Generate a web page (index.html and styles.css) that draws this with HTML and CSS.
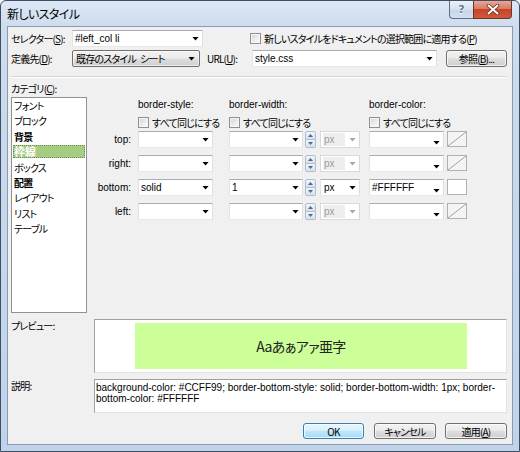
FILE: index.html
```html
<!DOCTYPE html>
<html lang="ja">
<head>
<meta charset="utf-8">
<title>新しいスタイル</title>
<link rel="stylesheet" href="styles.css">
</head>
<body>
<div class="window">
  <div class="titlebar">
    <span class="title">新しいスタイル</span>
    <div class="caps">
      <div class="cap help">?</div>
      <div class="cap close">
        <svg width="14" height="11" viewBox="0 0 14 11"><path d="M2.5 1.5 L11.5 9.5 M11.5 1.5 L2.5 9.5" stroke="#6b2a1e" stroke-width="3.6" stroke-linecap="round"/><path d="M2.5 1.5 L11.5 9.5 M11.5 1.5 L2.5 9.5" stroke="#ffffff" stroke-width="2" stroke-linecap="round"/></svg>
      </div>
    </div>
  </div>
  <div class="client">
    <div class="row r1">
      <span class="lbl">セレクター(<u>S</u>):</span>
      <div class="combo sel"><span class="txt lat">#left_col li</span><i class="arr"></i></div>
      <div class="chk apply"><span class="cb"></span><span>新しいスタイルをドキュメントの選択範囲に適用する(<u>P</u>)</span></div>
    </div>
    <div class="row r2">
      <span class="lbl">定義先(<u>D</u>):</span>
      <div class="dropbtn"><span class="txt">既存のスタイル&ensp;シート</span><i class="arr"></i></div>
      <span class="url-lbl">URL(<u>U</u>):</span>
      <div class="combo url"><span class="txt lat">style.css</span><i class="arr"></i></div>
      <div class="btn browse">参照(<u>B</u>)...</div>
    </div>
    <div class="sep"></div>
    <div class="cat-lbl">カテゴリ(<u>C</u>):</div>
    <div class="main">
      <ul class="catlist">
        <li>フォント</li>
        <li>ブロック</li>
        <li class="b">背景</li>
        <li class="b on"><span>枠線</span></li>
        <li>ボックス</li>
        <li class="b">配置</li>
        <li>レイアウト</li>
        <li>リスト</li>
        <li>テーブル</li>
      </ul>
      <div class="bgrid">
        <div class="hd lat c-style">border-style:</div>
        <div class="hd lat c-width">border-width:</div>
        <div class="hd lat c-color">border-color:</div>

        <div class="chk c-style ck"><span class="cb"></span><span>すべて同じにする</span></div>
        <div class="chk c-width ck"><span class="cb"></span><span>すべて同じにする</span></div>
        <div class="chk c-color ck"><span class="cb"></span><span>すべて同じにする</span></div>

        <div class="rl lat">top:</div>
        <div class="combo st"><span class="txt"></span><i class="arr"></i></div>
        <div class="combo wd"><span class="txt"></span><i class="arr"></i></div>
        <div class="spin"><span class="up"></span><span class="dn"></span></div>
        <div class="combo unit dis"><span class="txt lat">px</span><i class="arr"></i></div>
        <div class="combo col"><span class="txt"></span><i class="arr low"></i></div>
        <div class="sw none"></div>

        <div class="rl lat">right:</div>
        <div class="combo st"><span class="txt"></span><i class="arr"></i></div>
        <div class="combo wd"><span class="txt"></span><i class="arr"></i></div>
        <div class="spin"><span class="up"></span><span class="dn"></span></div>
        <div class="combo unit dis"><span class="txt lat">px</span><i class="arr"></i></div>
        <div class="combo col"><span class="txt"></span><i class="arr low"></i></div>
        <div class="sw none"></div>

        <div class="rl lat">bottom:</div>
        <div class="combo st"><span class="txt lat">solid</span><i class="arr"></i></div>
        <div class="combo wd"><span class="txt lat">1</span><i class="arr"></i></div>
        <div class="spin"><span class="up"></span><span class="dn"></span></div>
        <div class="combo unit"><span class="txt lat">px</span><i class="arr"></i></div>
        <div class="combo col"><span class="txt lat">#FFFFFF</span><i class="arr low"></i></div>
        <div class="sw white"></div>

        <div class="rl lat">left:</div>
        <div class="combo st"><span class="txt"></span><i class="arr"></i></div>
        <div class="combo wd"><span class="txt"></span><i class="arr"></i></div>
        <div class="spin"><span class="up"></span><span class="dn"></span></div>
        <div class="combo unit dis"><span class="txt lat">px</span><i class="arr"></i></div>
        <div class="combo col"><span class="txt"></span><i class="arr low"></i></div>
        <div class="sw none"></div>
      </div>
    </div>
    <div class="prow">
      <div class="side-lbl">プレビュー:</div>
      <div class="pbox"><div class="pinner">Aaあぁアァ亜字</div></div>
    </div>
    <div class="drow">
      <div class="side-lbl">説明:</div>
      <div class="dbox lat">background-color: #CCFF99; border-bottom-style: solid; border-bottom-width: 1px; border-<br>bottom-color: #FFFFFF</div>
    </div>
    <div class="buttons">
      <div class="btn ok">OK</div>
      <div class="btn cancel">キャンセル</div>
      <div class="btn apply-btn">適用(<u>A</u>)</div>
    </div>
  </div>
</div>
</body>
</html>
```

FILE: styles.css
```css
* { box-sizing: border-box; }
html, body { margin: 0; padding: 0; background: #ffffff; }

.window {
  width: 520px;
  height: 452px;
  border: 1px solid #3f4e63;
  border-radius: 6px 6px 0 0;
  background: linear-gradient(180deg, #dde8f5 0, #cddcee 26px, #bfd3ea 100%);
  padding: 0 6px 6px;
  display: flex;
  flex-direction: column;
  font-family: "Noto Sans CJK JP", sans-serif;
  font-size: 10px;
  letter-spacing: -0.8px;
  font-feature-settings: "palt";
  line-height: 13px;
  color: #000;
  overflow: hidden;
}

.lat {
  font-family: "Liberation Sans", "Noto Sans CJK JP", sans-serif;
  font-size: 10px;
  letter-spacing: 0;
  font-feature-settings: normal;
}

u { text-decoration: underline; text-underline-offset: 1px; }

/* title bar */
.titlebar { height: 25px; display: flex; align-items: flex-start; flex-shrink: 0; }
.title { font-size: 12px; letter-spacing: -0.6px; line-height: 25px; color: #000; }
.caps { margin-left: auto; margin-right: 1px; display: flex; }
.cap { height: 18px; display: flex; align-items: center; justify-content: center; border: 1px solid #5f6f86; border-top: none; }
.help {
  width: 24px;
  border-radius: 0 0 0 4px;
  border-right: none;
  background: linear-gradient(180deg, #eaf1f9 0%, #d5e1ef 50%, #c5d4e8 51%, #d3e0f0 100%);
  color: #6a7a90;
  font-family: "DejaVu Sans", sans-serif;
  font-size: 11px;
  letter-spacing: 0;
  font-weight: bold;
  text-shadow: 0 1px 0 #fff;
}
.close {
  width: 39px;
  border-radius: 0 0 4px 0;
  border-color: #6a3428;
  background: linear-gradient(180deg, #e9a898 0%, #d97a64 45%, #c5442a 50%, #d2583a 100%);
}

/* client */
.client {
  flex: 1;
  background: #f0f0f0;
  border: 1px solid #8a9ab0;
  padding: 0 5px 0 3px;
  display: flex;
  flex-direction: column;
}

.row { display: flex; align-items: center; height: 17px; flex-shrink: 0; }
.r1 { margin-top: 3px; }
.r2 { margin-top: 3px; }
.lbl { width: 61px; white-space: nowrap; }

.combo {
  height: 17px;
  background: #fff;
  border: 1px solid;
  border-color: #abadb3 #dbdfe6 #e3e9ef #e2e3ea;
  display: flex;
  align-items: center;
  padding: 0 3px 0 2px;
  flex-shrink: 0;
}
.combo .txt { flex: 1; white-space: nowrap; overflow: hidden; }
.arr {
  display: block;
  width: 7px;
  height: 4px;
  background: #000;
  clip-path: polygon(0 0, 100% 0, 50% 100%);
  flex-shrink: 0;
}
.arr.low { margin-top: 6px; }

.sel { width: 131px; }
.url { width: 185px; }

.chk { display: flex; align-items: center; gap: 3px; white-space: nowrap; }
.apply { margin-left: 47px; }
.cb {
  width: 11px;
  height: 11px;
  border: 1px solid #8e8f8f;
  background: linear-gradient(135deg, #cfd2d6 0%, #eeeeee 60%, #fbfbfb 100%);
  box-shadow: inset 0 0 0 1px #f6f6f6;
  flex-shrink: 0;
}

.dropbtn {
  width: 128px;
  height: 17px;
  border: 1px solid #707070;
  border-radius: 2px;
  background: linear-gradient(180deg, #f2f2f2 0%, #ebebeb 48%, #dddddd 52%, #cfcfcf 100%);
  box-shadow: inset 0 0 0 1px rgba(255,255,255,0.6);
  display: flex;
  align-items: center;
  padding: 0 4px 0 3px;
  flex-shrink: 0;
}
.dropbtn .txt { flex: 1; white-space: nowrap; }

.url-lbl { margin-left: 7px; width: 45px; white-space: nowrap; }

.btn {
  height: 17px;
  border: 1px solid #707070;
  border-radius: 3px;
  background: linear-gradient(180deg, #f2f2f2 0%, #ebebeb 45%, #dddddd 52%, #cfcfcf 100%);
  box-shadow: inset 0 0 0 1px rgba(255,255,255,0.7);
  display: flex;
  align-items: center;
  justify-content: center;
  white-space: nowrap;
  flex-shrink: 0;
}
.browse { margin-left: 9px; width: 61px; }

.sep {
  margin-top: 9px;
  height: 2px;
  border-top: 1px solid #d5d5d5;
  border-bottom: 1px solid #ffffff;
  flex-shrink: 0;
}

.cat-lbl { margin-top: 4px; height: 13px; flex-shrink: 0; }

.main { display: flex; margin-top: 2px; height: 216px; flex-shrink: 0; }

.catlist {
  width: 76px;
  height: 216px;
  margin: 0;
  padding: 0;
  list-style: none;
  background: #fff;
  border: 1px solid #8e9298;
  flex-shrink: 0;
}
.catlist li {
  height: 15.4px;
  line-height: 15.4px;
  padding-left: 2px;
  white-space: nowrap;
}
.catlist li.b { font-weight: bold; }
.catlist li.on { padding: 1px 1px 0; }
.catlist li.on span {
  display: block;
  height: 13px;
  line-height: 13px;
  padding-left: 1px;
  background: #a5cc80;
  color: #fff;
  font-size: 11px;
  letter-spacing: 0;
  outline: 1px dotted #6f8a58;
  outline-offset: -1px;
}

.bgrid {
  display: grid;
  grid-template-columns: 51px 91px 76px 15px 49px 78px 20px;
  grid-template-rows: 15px 19px 24px 24px 24px 24px;
  align-items: start;
}
.hd { line-height: 15px; white-space: nowrap; }
.c-style { grid-column: 2; }
.c-width { grid-column: 3 / span 3; }
.c-color { grid-column: 6 / span 2; }
.ck { margin-top: 4px; }

.rl { grid-column: 1; text-align: right; padding-right: 7px; line-height: 17px; }
.st { width: 75px; }
.wd { width: 74px; }
.col { width: 75px; }
.unit { width: 40px; }
.unit .txt { padding-left: 1px; }
.unit.dis { border-color: #d9d9d9; color: #9a9a9a; }
.unit.dis .txt { background: #eeeeee; margin-right: 4px; }
.unit.dis .arr { background: #a8a8a8; }

.spin {
  width: 11px;
  height: 17px;
  display: flex;
  flex-direction: column;
}
.spin span {
  flex: 1;
  border: 1px solid #b1bdcd;
  background: linear-gradient(180deg, #f2f6fb 0%, #d6e0ec 100%);
  position: relative;
}
.spin .up { border-radius: 2px 2px 0 0; }
.spin .dn { border-radius: 0 0 2px 2px; border-top: none; }
.spin span::after {
  content: "";
  position: absolute;
  left: 2px;
  top: 2px;
  width: 5px;
  height: 3px;
  background: #4a6a98;
}
.spin .up::after { clip-path: polygon(50% 0, 100% 100%, 0 100%); }
.spin .dn::after { clip-path: polygon(0 0, 100% 0, 50% 100%); top: 2px; }

.sw {
  width: 20px;
  height: 16px;
  border: 1px solid #b0b0b0;
}
.sw.none {
  background: linear-gradient(to bottom right, transparent calc(50% - 0.7px), #9a9a9a 50%, transparent calc(50% + 0.7px)), #f4f4f4;
}
.sw.white { background: #ffffff; }

.prow, .drow { display: flex; flex-shrink: 0; }
.prow { margin-top: 6px; }
.drow { margin-top: 6px; }
.side-lbl { width: 83px; flex-shrink: 0; }

.pbox {
  width: 413px;
  height: 54px;
  border: 1px solid;
  border-color: #a0a0a0 #e3e3e3 #e3e3e3 #a0a0a0;
  background: #fff;
  padding: 3px 39px 3px 40px;
}
.pinner {
  height: 100%;
  background: #ccff99;
  display: flex;
  align-items: center;
  justify-content: center;
  font-size: 14px;
  letter-spacing: -0.6px;
  color: #222;
}

.dbox {
  width: 413px;
  height: 34px;
  border: 1px solid;
  border-color: #a0a0a0 #e3e3e3 #e3e3e3 #a0a0a0;
  background: #fff;
  padding: 2px 1px 0 1px;
  line-height: 11px;
  white-space: nowrap;
  overflow: hidden;
}

.buttons {
  display: flex;
  justify-content: flex-end;
  margin-top: 10px;
  flex-shrink: 0;
}
.buttons .btn { height: 16px; }
.ok {
  width: 61px;
  border-color: #3c7fb1;
  background: linear-gradient(180deg, #eaf6fd 0%, #d9f0fc 45%, #bee6fd 52%, #a7d9f5 100%);
}
.cancel { width: 62px; margin-left: 10px; }
.apply-btn { width: 62px; margin-left: 9px; }
```
